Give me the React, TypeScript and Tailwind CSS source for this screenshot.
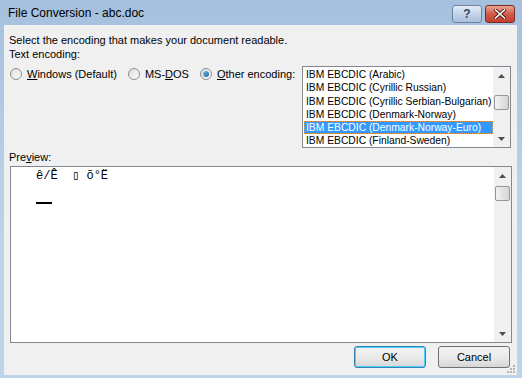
const encodings = [
  'IBM EBCDIC (Arabic)',
  'IBM EBCDIC (Cyrillic Russian)',
  'IBM EBCDIC (Cyrillic Serbian-Bulgarian)',
  'IBM EBCDIC (Denmark-Norway)',
  'IBM EBCDIC (Denmark-Norway-Euro)',
  'IBM EBCDIC (Finland-Sweden)',
];

const ui = { fontFamily: '"Liberation Sans", Arial, sans-serif' };
const listFont = { fontFamily: '"Liberation Sans", Arial, sans-serif' };

function Radio({ label, mnemonic, rest, checked }: { label?: string; mnemonic: string; rest: string; checked?: boolean }) {
  return (
    <div className="flex items-center gap-[5px] whitespace-nowrap shrink-0">
      <span className="w-[12px] h-[12px] rounded-full border border-[#8e8f8f] bg-gradient-to-br from-[#dcdcdc] to-[#fdfdfd] flex items-center justify-center shrink-0">
        {checked && <span className="w-[6px] h-[6px] rounded-full bg-gradient-to-br from-[#7cc8f2] to-[#1a5e9c]" />}
      </span>
      <span>
        {label}
        <span className="underline">{mnemonic}</span>
        {rest}
      </span>
    </div>
  );
}

function ScrollBar({ thumbTop, thumbH }: { thumbTop: number; thumbH: number }) {
  return (
    <div className="w-[17px] h-full bg-[#f0f0f0] flex flex-col items-center shrink-0">
      <div className="h-[17px] flex items-center justify-center">
        <svg width="7" height="4" viewBox="0 0 7 4"><path d="M3.5 0L7 4H0z" fill="#4d4d4d" /></svg>
      </div>
      <div
        className="w-[15px] rounded-[2px] border border-[#979797] bg-gradient-to-r from-[#f2f2f2] to-[#d5d5d5]"
        style={{ marginTop: thumbTop, height: thumbH }}
      />
      <div className="flex-1" />
      <div className="h-[17px] flex items-center justify-center">
        <svg width="7" height="4" viewBox="0 0 7 4"><path d="M0 0H7L3.5 4z" fill="#4d4d4d" /></svg>
      </div>
    </div>
  );
}

export default function App() {
  return (
    <div className="w-[522px] h-[378px] bg-gradient-to-b from-[#a5c0dd] via-[#b9d1ea] to-[#bcd4ec] flex flex-col text-[11px] text-black" style={ui}>
      {/* Title bar */}
      <div className="h-[25px] flex items-start justify-between pl-[8px] pr-[7px]">
        <span className="mt-[6px] text-[12px] leading-[14px] text-black">File Conversion - abc.doc</span>
        <div className="flex gap-[3px] mt-[5px]">
          <div className="w-[30px] h-[18px] rounded-[3px] border border-[#6d83a0] bg-gradient-to-b from-[#e3ecf6] via-[#c3d4e8] to-[#a9c0dc] flex items-center justify-center text-[12px] font-bold text-[#33475e]">?</div>
          <div className="w-[30px] h-[18px] rounded-[3px] border border-[#7a2c25] bg-gradient-to-b from-[#e8a394] via-[#d0594a] to-[#c4402f] flex items-center justify-center">
            <svg width="12" height="10" viewBox="0 0 12 10">
              <path d="M1.5 1L10.5 9M10.5 1L1.5 9" stroke="#3d0f0a" strokeWidth="3.2" strokeLinecap="square" />
              <path d="M1.5 1L10.5 9M10.5 1L1.5 9" stroke="#ffffff" strokeWidth="1.6" strokeLinecap="square" />
            </svg>
          </div>
        </div>
      </div>

      {/* Client area */}
      <div className="ml-[4px] w-[513px] h-[350px] bg-[#f0f0f0] relative flex flex-col">
        <div className="ml-[5px] mt-[8px] leading-[14px]">Select the encoding that makes your document readable.</div>
        <div className="ml-[5px] leading-[14px]">Text encoding:</div>

        <div className="flex mt-[5px]">
          <div className="flex gap-[11px] ml-[6px] mt-[1px] h-[14px] leading-[14px]">
            <Radio mnemonic="W" rest="indows (Default)" />
            <Radio label="MS-" mnemonic="D" rest="OS" />
            <Radio checked mnemonic="O" rest="ther encoding:" />
          </div>
          <div className="ml-auto mr-[6px] w-[209px] h-[82px] shrink-0 border border-[#828790] bg-white flex overflow-hidden">
            <div className="flex-1 pt-[1px] pl-[1px] text-[10.3px] leading-[13.3px] overflow-hidden" style={listFont}>
              {encodings.map((e, i) => (
                <div
                  key={e}
                  className={
                    i === 4
                      ? 'bg-[#3399ff] text-white pl-[2px] outline outline-1 outline-dotted outline-[#e79d47] -outline-offset-1 whitespace-nowrap'
                      : 'pl-[2px] whitespace-nowrap'
                  }
                >
                  {e}
                </div>
              ))}
            </div>
            <ScrollBar thumbTop={11} thumbH={15} />
          </div>
        </div>

        <div className="ml-[5px] mt-[2px] leading-[14px]">
          Pre<span className="underline">v</span>iew:
        </div>
        <div className="ml-[6px] mt-[2px] w-[502px] h-[177px] border border-[#828790] bg-white flex">
          <div className="flex-1 pl-[25px] pt-[2px]">
            <div className="text-[12px] leading-[14px] whitespace-pre" style={{ fontFamily: '"Liberation Mono", "DejaVu Sans Mono", monospace' }}>
              {'ê/Ê  \u25af õ°Ë'}
            </div>
            <div className="mt-[19px] w-[16px] h-[2px] bg-black" />
          </div>
          <ScrollBar thumbTop={2} thumbH={15} />
        </div>

        <div className="flex justify-end gap-[12px] mr-[7px] mt-[3px]">
          <button className="w-[72px] h-[22px] rounded-[3px] border border-[#3c7fb1] shadow-[inset_0_0_0_1px_#48d2fb] bg-gradient-to-b from-[#f2f2f2] via-[#ebebeb] to-[#d6d6d6] text-[11px]">OK</button>
          <button className="w-[72px] h-[22px] rounded-[3px] border border-[#707070] bg-gradient-to-b from-[#f2f2f2] via-[#ebebeb] to-[#d6d6d6] text-[11px]">Cancel</button>
        </div>

        <svg className="absolute right-[1px] bottom-[1px]" width="10" height="10" viewBox="0 0 10 10">
          <rect x="7" y="7" width="2" height="2" fill="#b4b4b4" />
          <rect x="4" y="7" width="2" height="2" fill="#b4b4b4" />
          <rect x="7" y="4" width="2" height="2" fill="#b4b4b4" />
          <rect x="1" y="7" width="2" height="2" fill="#b4b4b4" />
          <rect x="4" y="4" width="2" height="2" fill="#b4b4b4" />
          <rect x="7" y="1" width="2" height="2" fill="#b4b4b4" />
        </svg>
      </div>
    </div>
  );
}
